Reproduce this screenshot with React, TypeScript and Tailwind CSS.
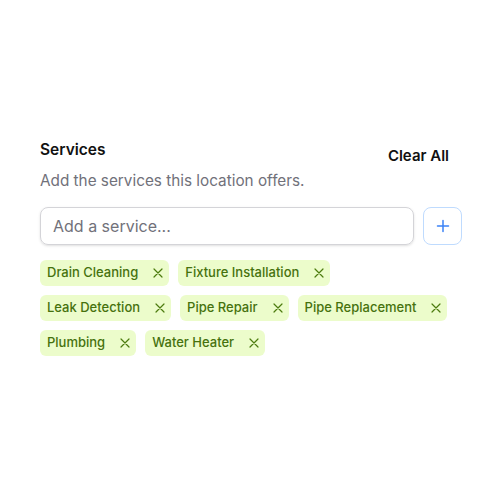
import React from "react";

const services = [
  "Drain Cleaning",
  "Fixture Installation",
  "Leak Detection",
  "Pipe Repair",
  "Pipe Replacement",
  "Plumbing",
  "Water Heater",
];

function XIcon() {
  return (
    <svg width="12" height="12" viewBox="0 0 12 12" fill="none" stroke="currentColor" strokeWidth="1.2" strokeLinecap="round">
      <path d="M2 2l8 8M10 2l-8 8" />
    </svg>
  );
}

export default function App() {
  return (
    <div
      className="w-[500px] h-[500px] bg-white flex flex-col pl-[40px] pr-[38px] pt-[140px]"
      style={{ fontFamily: "Inter, 'Noto Sans', sans-serif" }}
    >
      <div className="flex justify-between items-start">
        <div className="flex flex-col">
          <div className="text-[15.5px] font-semibold text-[#111] leading-[20px]">Services</div>
          <div className="text-[15.3px] text-[#71717a] leading-[20px] mt-[11px]">
            Add the services this location offers.
          </div>
        </div>
        <button className="text-[15px] font-semibold text-[#111] leading-[20px] mt-[6px] mr-[13px]">Clear All</button>
      </div>
      <div className="flex gap-[9px] mt-[16px]">
        <input
          className="flex-1 min-w-0 h-[38px] rounded-[8px] border border-[#d4d4d8] px-[12px] text-[16px] placeholder-[#71717a] shadow-sm outline-none"
          placeholder="Add a service..."
        />
        <button className="w-[39px] h-[38px] shrink-0 rounded-[8px] border border-[#bfdbfe] flex items-center justify-center text-[#3b82f6]">
          <svg width="14" height="14" viewBox="0 0 14 14" fill="none" stroke="currentColor" strokeWidth="1.5" strokeLinecap="round">
            <path d="M7 1.5v11M1.5 7h11" />
          </svg>
        </button>
      </div>
      <div className="flex flex-wrap gap-[9px] mt-[15px]">
        {services.map((s) => (
          <div
            key={s}
            className="h-[26px] flex items-center rounded-[6px] bg-[#ecfccb] pl-[7px] pr-[5px] text-[13px] font-medium text-[#46720e]"
          >
            <span>{s}</span>
            <span className="ml-[14px] text-[#4d7c0f] flex items-center">
              <XIcon />
            </span>
          </div>
        ))}
      </div>
    </div>
  );
}
